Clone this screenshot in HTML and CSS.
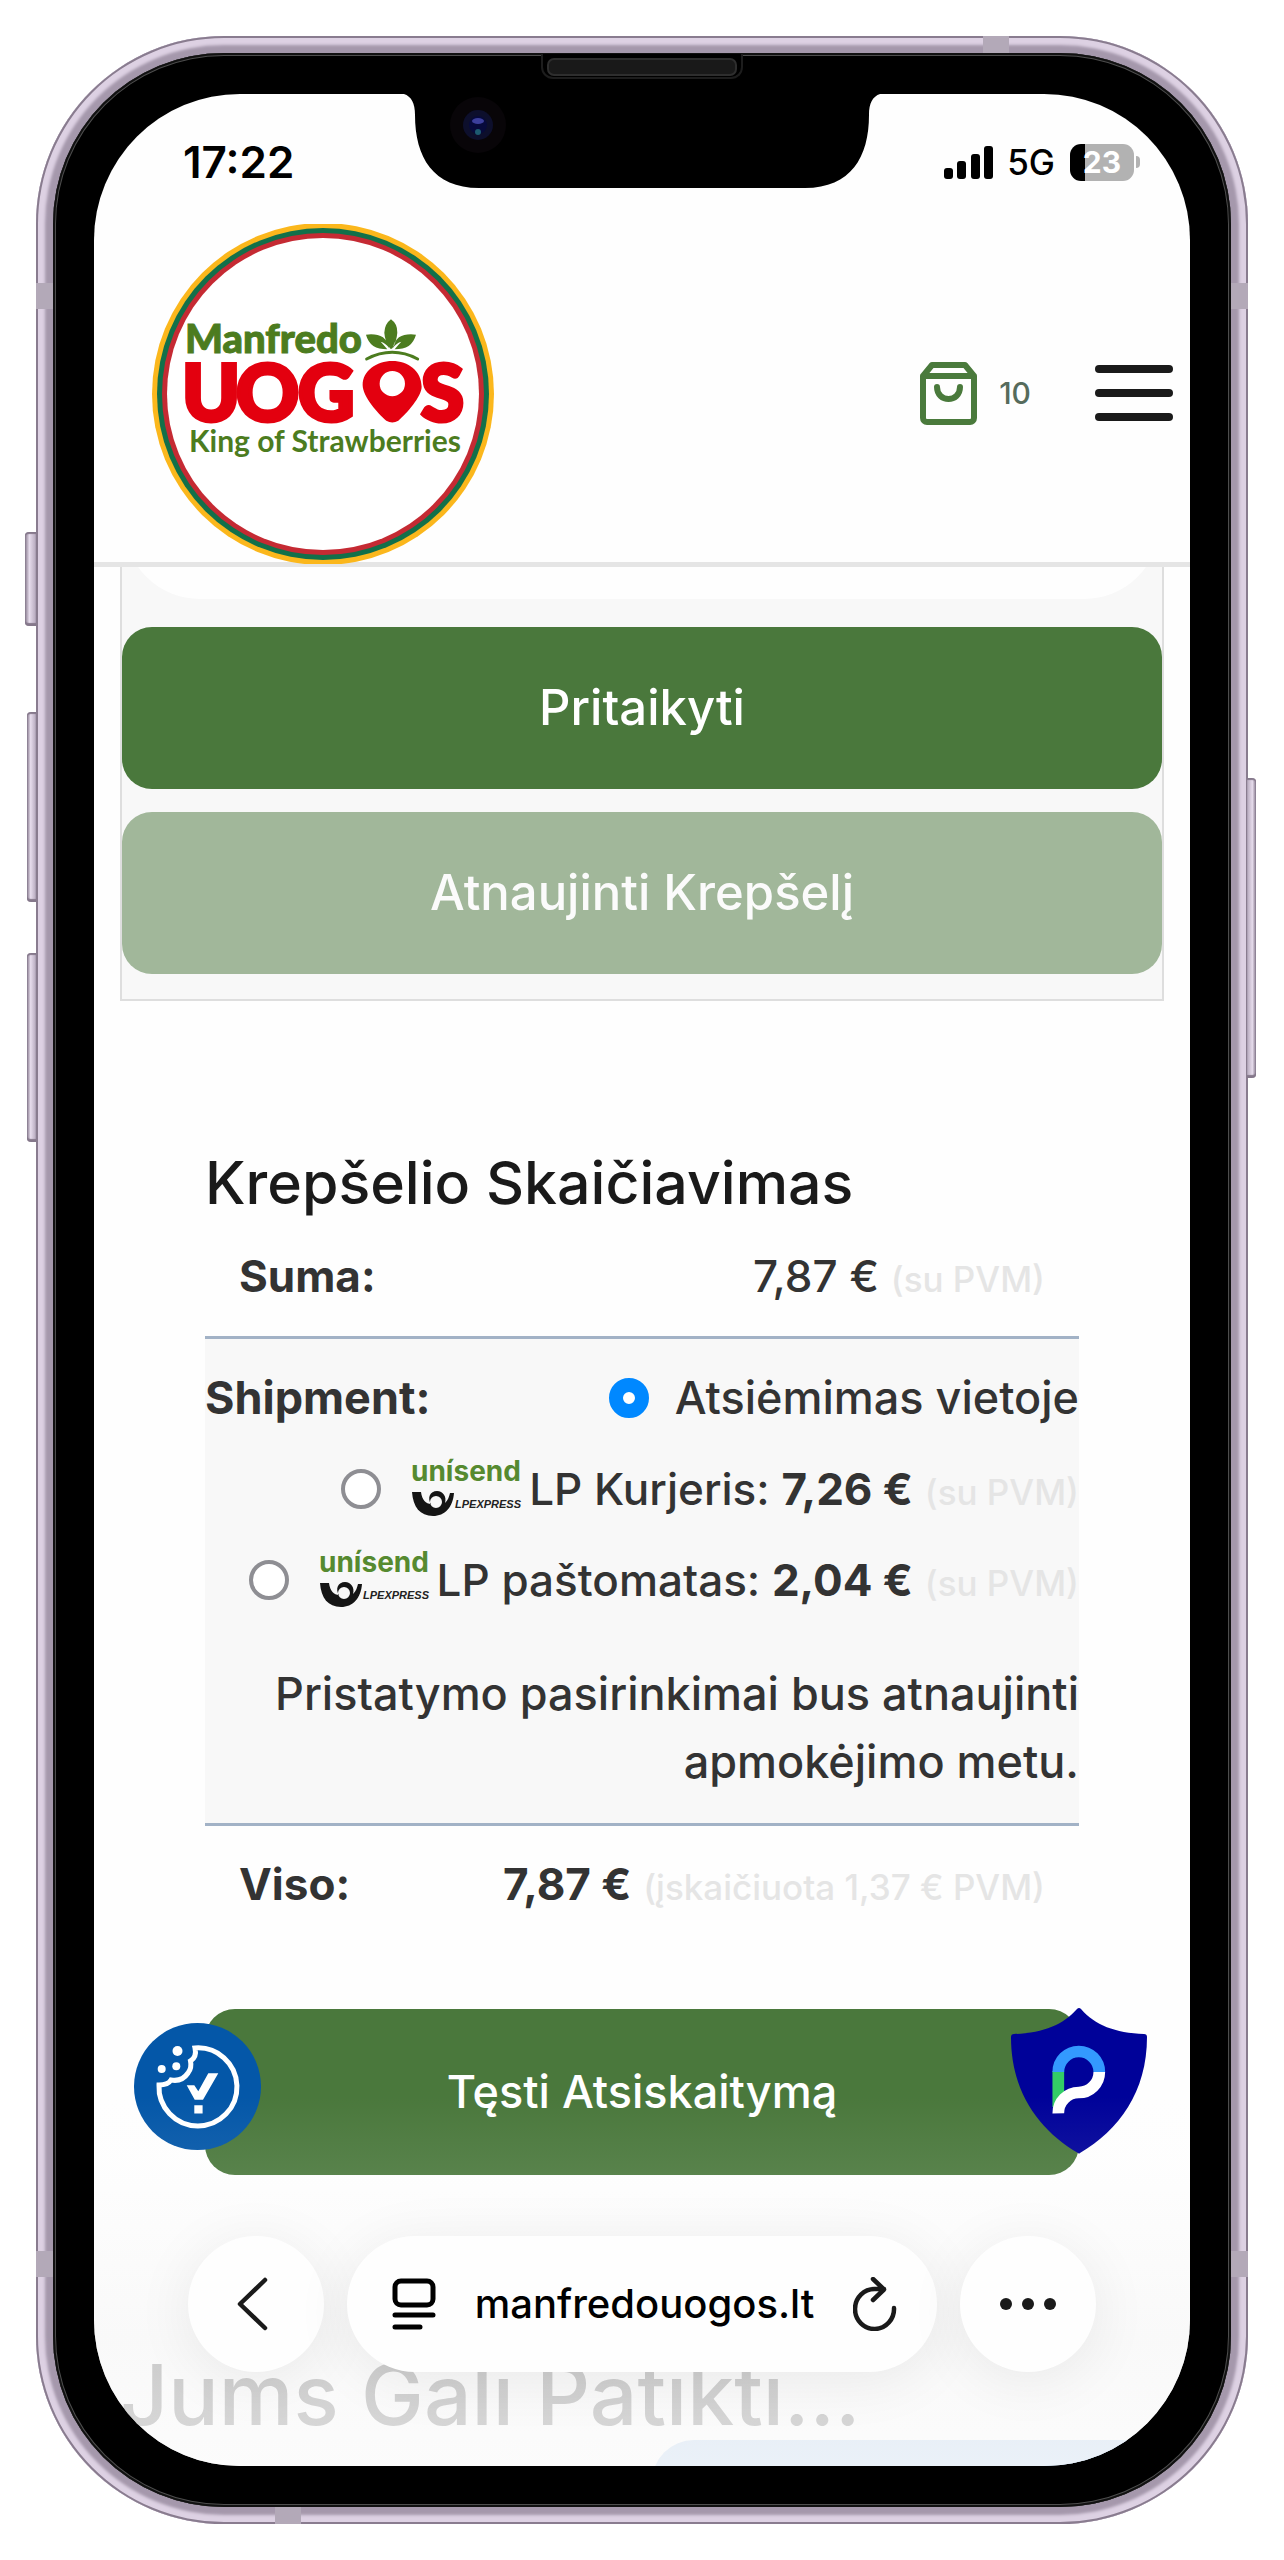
FILE: index.html
```html
<!DOCTYPE html>
<html lang="lt">
<head>
<meta charset="utf-8">
<meta name="viewport" content="width=device-width, initial-scale=1">
<title>Krepšelis – Manfredo uogos</title>
<link rel="stylesheet" href="styles.css">
</head>
<body>
<div class="phone">
  <span class="key key-mute"></span>
  <span class="key key-up"></span>
  <span class="key key-down"></span>
  <span class="key key-power"></span>
  <span class="band band-left band-high"></span>
  <span class="band band-right band-high"></span>
  <span class="band band-left band-low"></span>
  <span class="band band-right band-low"></span>
  <span class="band band-top"></span>
  <span class="band band-bottom"></span>
  <div class="bezel">
    <span class="speaker"></span>
    <div class="screen">
      <svg class="notch" viewBox="0 0 490 95" aria-hidden="true">
        <path d="M0 0C12 0 18 7 18 22C18 64 36 95 82 95H408C454 95 472 64 472 22C472 7 478 0 490 0Z" fill="#000"/>
        <circle cx="81" cy="32" r="28" fill="#080508"/>
        <circle cx="81" cy="32" r="15" fill="#0d0f2c"/>
        <circle cx="81" cy="32" r="9" fill="#070a3c"/>
        <ellipse cx="81" cy="28" rx="6" ry="3" fill="#3c3f9c"/>
        <circle cx="81" cy="39" r="3" fill="#1d5a70"/>
      </svg>

      <div class="status">
        <span class="time">17:22</span>
        <svg class="signal" width="49" height="33" viewBox="0 0 49 33" aria-hidden="true">
          <rect x="0" y="22" width="9" height="11" rx="3"/><rect x="13" y="15" width="9" height="18" rx="3"/><rect x="27" y="8" width="9" height="25" rx="3"/><rect x="40" y="0" width="9" height="33" rx="3"/>
        </svg>
        <span class="network">5G</span>
        <span class="battery">23</span>
      </div>

      <header class="header">
        <a class="logo" href="#" aria-label="Manfredo uogos">
          <svg width="342" height="340" viewBox="0 0 342 340">
            <circle cx="171" cy="170" r="171" fill="#fbb71c"/>
            <circle cx="171" cy="170" r="166" fill="#12704a"/>
            <circle cx="171" cy="170" r="161" fill="#c52a33"/>
            <circle cx="171" cy="170" r="156" fill="#fff"/>
            <text x="33" y="129" class="logo-top">Manfredo</text>
            <g class="logo-main"><text x="30" y="197">U</text><text x="84" y="197">O</text><text x="146" y="197">G</text><text x="269" y="197">S</text></g>
            <text x="37" y="228" class="logo-sub">King of Strawberries</text>
            <g transform="translate(-12 -14) scale(.3333)">
              <path fill="#e3000f" fill-rule="evenodd" d="M757 453C805 453 845 483 845 530C845 560 800 610 775 632Q757 643 739 632C714 610 668 560 668 525C668 483 709 453 757 453ZM757 483a38 38 0 1 0 0 76a38 38 0 0 0 0-76Z"/>
              <g fill="#4c7c1f"><path d="M753 328Q773 342 772 368Q770 396 756 416H751Q735 396 733 368Q734 342 753 328ZM678 374Q710 370 729 382Q742 392 748 415Q736 398 722 395Q732 405 742 418Q716 418 700 408Q684 396 678 374ZM828 374Q796 370 777 382Q764 392 758 415Q770 398 784 395Q774 405 764 418Q790 418 806 408Q822 396 828 374Z"/></g>
              <path d="M680 447Q757 407 833 447" fill="none" stroke="#4c7c1f" stroke-width="9" stroke-linecap="round"/>
            </g>
          </svg>
        </a>
        <a class="cart" href="#" aria-label="Krepšelis">
          <svg width="57" height="63" viewBox="0 0 57 63" fill="none" stroke="#4a7a3c" stroke-width="6" stroke-linejoin="round" stroke-linecap="round" aria-hidden="true">
            <path d="M3 14 12 3H45L54 14V56a4 4 0 0 1-4 4H7a4 4 0 0 1-4-4ZM3 14H54M17 25c0 16 23 16 23 0"/>
          </svg>
          <span>10</span>
        </a>
        <button class="menu" type="button" aria-label="Meniu"><i></i><i></i><i></i></button>
      </header>

      <main>
        <form class="coupon">
          <div class="coupon-field"><input type="text" aria-label="Kupono kodas"></div>
          <button class="btn" type="button">Pritaikyti</button>
          <button class="btn" type="button" disabled>Atnaujinti Krepšelį</button>
        </form>

        <section class="totals">
          <h2>Krepšelio Skaičiavimas</h2>
          <table>
            <tbody>
              <tr class="sum"><th>Suma:</th><td>7,87 € <small>(su PVM)</small></td></tr>
              <tr class="shipping">
                <th>Shipment:</th>
                <td>
                  <ul>
                    <li><input type="radio" name="ship" id="s1" checked><label for="s1">Atsiėmimas vietoje</label></li>
                    <li>
                      <input type="radio" name="ship" id="s2">
                      <svg class="carrier" width="114" height="58" viewBox="0 0 114 58">
                        <text x="0" y="21" class="carrier-name">unísend</text>
                        <path d="M1 32h9c1 8 5 12 10 12-4-6-1-13 6-13 6 0 10 6 8 12 3-3 4-6 5-10h4c-1 14-9 23-21 23C9 56 2 47 1 32Zm24 4a6 6 0 1 0 0 12 6 6 0 0 0 0-12Z" fill="#151515" fill-rule="evenodd"/>
                        <text x="44" y="48" class="carrier-sub">LPEXPRESS</text>
                      </svg>
                      <label for="s2">LP Kurjeris: <b>7,26 €</b> <small>(su PVM)</small></label>
                    </li>
                    <li>
                      <input type="radio" name="ship" id="s3">
                      <svg class="carrier" width="114" height="58" viewBox="0 0 114 58">
                        <text x="0" y="21" class="carrier-name">unísend</text>
                        <path d="M1 32h9c1 8 5 12 10 12-4-6-1-13 6-13 6 0 10 6 8 12 3-3 4-6 5-10h4c-1 14-9 23-21 23C9 56 2 47 1 32Zm24 4a6 6 0 1 0 0 12 6 6 0 0 0 0-12Z" fill="#151515" fill-rule="evenodd"/>
                        <text x="44" y="48" class="carrier-sub">LPEXPRESS</text>
                      </svg>
                      <label for="s3">LP paštomatas: <b>2,04 €</b> <small>(su PVM)</small></label>
                    </li>
                  </ul>
                  <p>Pristatymo pasirinkimai bus atnaujinti apmokėjimo metu.</p>
                </td>
              </tr>
              <tr class="total"><th>Viso:</th><td><b>7,87 €</b> <small>(įskaičiuota 1,37 € PVM)</small></td></tr>
            </tbody>
          </table>
          <div class="checkout">
            <a class="btn" href="#">Tęsti Atsiskaitymą</a>
            <button class="badge cookie" type="button" aria-label="Slapukai">
              <svg width="127" height="127" viewBox="0 0 127 127">
                <circle cx="63.500" cy="63.500" r="63.500" fill="#0457a8"/>
                <path d="M61 25A39 39 0 1 1 25 62Q34 62 37 57Q48 59 54 50Q58 45 56.500 38Q63 34 61 25Z" fill="none" stroke="#fff" stroke-width="5"/>
                <g fill="#fff"><circle cx="43.500" cy="28" r="5"/><circle cx="27.700" cy="46" r="4"/><circle cx="42.300" cy="43.300" r="4"/><path d="M52.700 62.300H60.300L64.300 68.300 74.300 50.300H84.300L69 76.700H60.700ZM60.300 82.300h8.300v8.300h-8.300z"/></g>
              </svg>
            </button>
            <button class="badge shield" type="button" aria-label="Privatumas">
              <svg width="136" height="146" viewBox="0 0 136 146" fill="none" stroke-width="11.700">
                <path d="M66 1Q68 -1 70 1C84 17 104 25 133 26Q136 26 136 29C136 84 108 122 69 145Q68 146 67 145C28 122 0 84 0 29Q0 26 3 26C32 25 52 17 66 1Z" fill="#000299"/>
                <path d="M47.300 63V99" stroke="#33cc66"/>
                <path d="M88.300 64A20.500 20.500 0 0 1 67.800 84.500A20.500 20.500 0 0 0 47.300 105.300" stroke="#fff"/>
                <path d="M47.300 64A20.500 20.500 0 0 1 88.300 64" stroke="#3399ff"/>
              </svg>
            </button>
          </div>
        </section>

        <section class="related">
          <h2>Jums Gali Patikti...</h2>
          <div class="related-list"><div class="related-card"></div></div>
        </section>
      </main>

      <nav class="toolbar">
        <button class="round" type="button" aria-label="Atgal">
          <svg width="38" height="54" viewBox="0 0 38 54" fill="none" stroke="#1a1a1a" stroke-width="4.500" stroke-linecap="round" stroke-linejoin="round"><path d="M28 3 3 27 28 51"/></svg>
        </button>
        <div class="address">
          <button type="button" aria-label="Skaitymo rodinys">
            <svg width="44" height="52" viewBox="0 0 44 52" fill="none" stroke="#000" stroke-width="5" stroke-linecap="round"><rect x="3" y="3" width="38" height="24" rx="6"/><path d="M3 37H41M3 49H28"/></svg>
          </button>
          <button class="url" type="button">manfredouogos.lt</button>
          <button type="button" aria-label="Įkelti iš naujo">
            <svg width="44" height="54" viewBox="0 0 44 54" fill="none" stroke="#1a1a1a" stroke-width="4.500" stroke-linecap="round" stroke-linejoin="round"><path d="M41 31A19.500 20 0 1 1 22 12H31M20 2 31 12.500 20 23"/></svg>
          </button>
        </div>
        <button class="round" type="button" aria-label="Daugiau">
          <svg width="56" height="12" viewBox="0 0 56 12" fill="#1a1a1a"><circle cx="6" cy="6" r="6"/><circle cx="28" cy="6" r="6"/><circle cx="50" cy="6" r="6"/></svg>
        </button>
      </nav>
    </div>
  </div>
</div>
</body>
</html>
```
FILE: styles.css
```css
* { box-sizing: border-box; }

body {
  margin: 0;
  padding: 36px;
  background: #fff;
  color: #333;
  font: 450 45px/68px "Inter", sans-serif;
}

button { border: 0; padding: 0; background: none; font: inherit; color: inherit; }
a { color: inherit; text-decoration: none; }
svg { display: block; flex: none; }
h2, p, ul { margin: 0; padding: 0; font-weight: 450; }

/* Device shell */
.phone {
  position: relative;
  padding: 17px;
  border-radius: 188px;
  background: #a598ac;
  box-shadow: inset 0 0 0 2px #897c8f, inset 0 0 3px 9px #ddd1e3;
}
.bezel {
  position: relative;
  padding: 41px;
  border-radius: 171px;
  background: #000;
  box-shadow: inset 0 0 0 2px #111, inset 0 0 0 3px #4d4d4d;
}
.screen {
  position: relative;
  overflow: hidden;
  border-radius: 146px;
  background: #fefefe;
}
.key {
  position: absolute;
  left: -9px;
  width: 9px;
  border-radius: 4px 0 0 4px;
  background: linear-gradient(90deg, #85788b, #e6dcec 40%, #b5a8bc);
  box-shadow: inset 0 2px 1px #85788b, inset 0 -3px 1px #85788b;
}
.key-mute { top: 496px; left: -11px; width: 11px; height: 94px; }
.key-up { top: 676px; height: 190px; }
.key-down { top: 917px; height: 189px; }
.key-power {
  top: 742px;
  left: auto;
  right: -8px;
  height: 300px;
  border-radius: 0 4px 4px 0;
  background: linear-gradient(270deg, #85788b, #e6dcec 40%, #b5a8bc);
}
.band { position: absolute; width: 17px; height: 26px; background: #b3a9b8; }
.band-left { left: 0; }
.band-right { right: 0; }
.band-high { top: 247px; }
.band-low { bottom: 247px; }
.band-top, .band-bottom { width: 26px; height: 17px; }
.band-top { top: 0; right: 239px; }
.band-bottom { bottom: 0; left: 239px; }
.speaker {
  position: absolute;
  top: 1px;
  left: 50%;
  width: 202px;
  height: 25px;
  margin-left: -101px;
  border: 2px solid #1d1d1d;
  border-top: 0;
  border-radius: 0 0 12px 12px;
  background: #000;
}
.speaker::after {
  content: "";
  display: block;
  height: 14px;
  margin: 4px;
  border: 2px solid #2e2e2e;
  border-radius: 7px;
  background: #191919;
}
.notch {
  position: absolute;
  top: -1px;
  left: 50%;
  width: 490px;
  margin-left: -245px;
}

/* Status bar */
.status {
  display: flex;
  align-items: center;
  height: 130px;
  padding: 6px 50px 0 89px;
  color: #000;
}
.time { margin-right: auto; font-size: 44px; font-weight: 600; }
.network { margin: 0 15px 0 14px; font-size: 35px; font-weight: 500; }
.battery {
  position: relative;
  width: 64px;
  height: 37px;
  margin-right: 6px;
  border-radius: 11px;
  background: linear-gradient(90deg, #000 15px, #b2b2b2 15px);
  color: #fff;
  font-size: 30px;
  font-weight: 700;
  line-height: 37px;
  text-align: center;
}
.battery::after {
  content: "";
  position: absolute;
  right: -6px;
  top: 12px;
  width: 4px;
  height: 12px;
  border-radius: 0 5px 5px 0;
  background: #b2b2b2;
}

/* Site header */
.header {
  display: flex;
  align-items: center;
  border-bottom: 5px solid #e5e5e5;
  padding: 0 17px 0 58px;
}
.logo { position: relative; margin: 0 auto -2px 0; }
.logo-top { font: 900 40px "Lato", sans-serif; fill: #4c7c1f; stroke: #4c7c1f; }
.logo-main { font: 900 78px "Lato", sans-serif; fill: #e3000f; stroke: #e3000f; stroke-width: 4px; }
.logo-sub { font: 700 30px "Lato", sans-serif; fill: #4c7c1f; }
.cart { display: flex; align-items: center; gap: 22px; font-size: 30px; color: #566b5c; }
.menu { display: flex; flex-direction: column; gap: 16px; width: 78px; margin-left: 64px; }
.menu i { height: 8px; border-radius: 4px; background: #1a1a1a; }

/* Cart actions */
.coupon {
  display: flex;
  flex-direction: column;
  margin: 0 26px;
  padding-bottom: 25px;
  border: 2px solid #dedede;
  border-top: 0;
  background: #f8f8f8;
}
.coupon-field {
  display: flex;
  align-items: flex-end;
  height: 32px;
  margin: 0 2px 28px;
  overflow: hidden;
}
.coupon-field input {
  flex: 1;
  height: 154px;
  border: 0;
  border-radius: 76px;
  background: #fefefe;
}
.btn {
  display: block;
  width: 100%;
  padding: 47px 0;
  border-radius: 30px;
  background: #4a783c;
  color: #fff;
  font-size: 49px;
  text-align: center;
}
.btn:disabled { margin-top: 23px; background: #a1b79a; color: #fbfbfb; }

/* Totals */
.totals { padding: 148px 111px 0; }
.totals h2 { color: #1a1a1a; font-size: 59px; }
table, tbody, tr, td { display: block; }
small { color: #e5e5e5; font-size: 35px; line-height: 1; }
th { float: left; padding: 0; font-weight: 700; text-align: left; }
td { padding: 0; text-align: right; }
b { font-weight: 700; }
.sum, .total { font-size: 44px; }
.sum { padding: 25px 34px 26px; }
.shipping {
  padding: 25px 0 27px;
  border: solid #a2b2c6;
  border-width: 3px 0;
  background: #f8f8f8;
}
.total { padding: 24px 34px; }
.shipping ul { margin-bottom: 46px; list-style: none; }
.shipping li { display: flex; justify-content: flex-end; align-items: center; }
.shipping li + li { margin-top: 23px; }
.shipping li + li label { font-size: 44px; }
.shipping label { white-space: nowrap; }
.shipping input {
  appearance: none;
  flex: none;
  width: 40px;
  height: 40px;
  margin: 0 26px 0 0;
  border: 4px solid #8e8e93;
  border-radius: 50%;
  background: #fff;
}
.shipping input:checked { border: 14px solid #08f; }
.carrier { margin: 0 4px; overflow: visible; }
.carrier-name { font: 700 28px "Inter", sans-serif; fill: #568a30; }
.carrier-sub { font: italic 700 11px "Liberation Sans", sans-serif; fill: #222; }
.checkout { position: relative; margin-top: 67px; }
.checkout .btn { padding: 49px 0; font-size: 45px; }
.badge { position: absolute; }
.cookie { left: -71px; top: 14px; }
.shield { right: -68px; top: -1px; }

/* Related products */
.related { margin-top: 175px; padding: 0 26px; }
.related h2 { color: #5e5e5e; font-size: 84px; line-height: 90px; }
.related-list { height: 26px; overflow: hidden; }
.related-card { height: 120px; margin-left: 51%; border-radius: 42px; background: #a9c9ec; }

/* Browser toolbar */
.toolbar {
  position: absolute;
  inset: auto 0 0;
  display: flex;
  gap: 23px;
  padding: 140px 94px 94px;
  background: linear-gradient(rgba(247, 247, 247, 0), rgba(247, 247, 247, .08) 75px, rgba(247, 247, 247, .7) 240px, rgba(251, 251, 251, .8));
}
.round, .address {
  display: flex;
  align-items: center;
  justify-content: center;
  height: 136px;
  border-radius: 68px;
  background: #fefefe;
  box-shadow: 0 8px 60px rgba(0, 0, 0, .07);
}
.round { width: 136px; }
.address { flex: 1; justify-content: space-between; padding: 0 40px 0 45px; }
.url { color: #000; font-size: 40px; font-weight: 500; }
```
